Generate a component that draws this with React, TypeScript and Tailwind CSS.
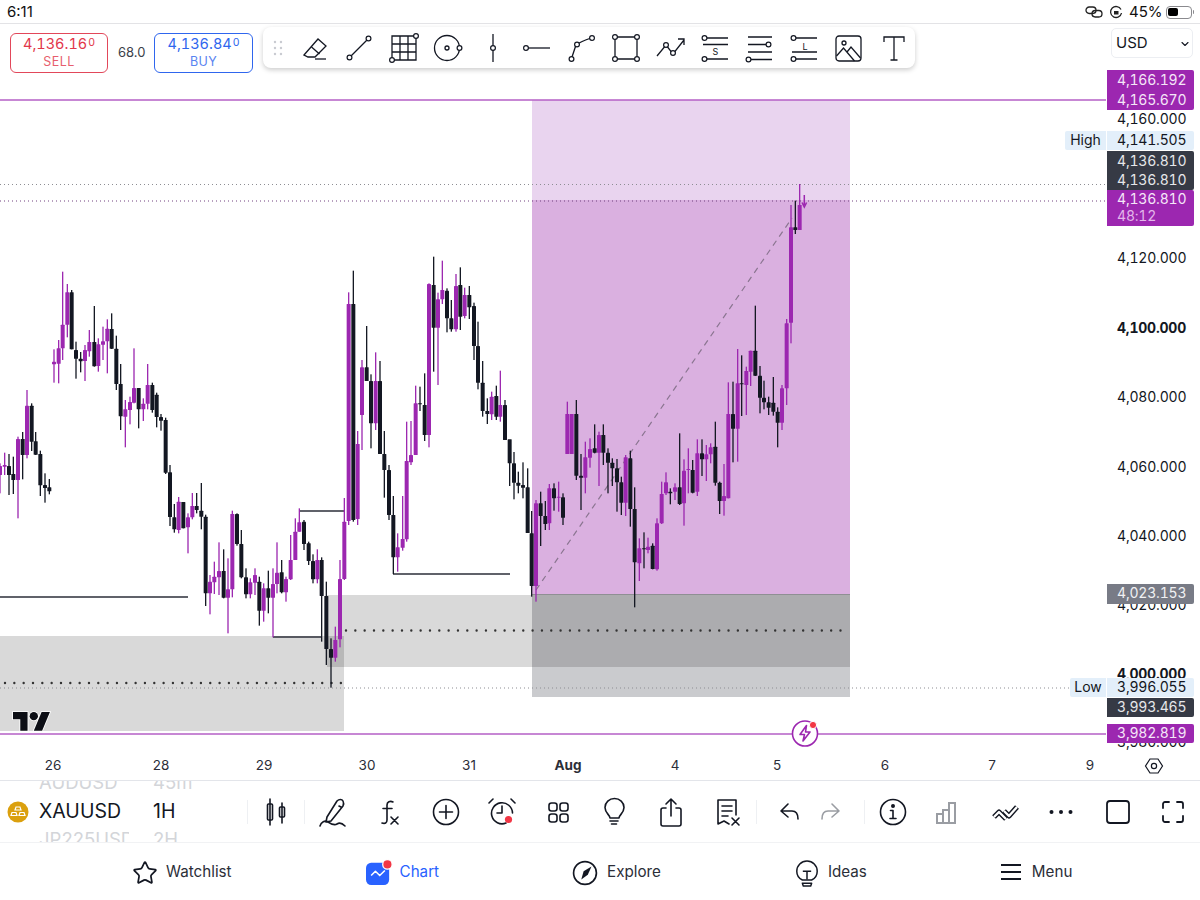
import { ChevronDown, Star } from "lucide-react";
import type { ReactNode } from "react";

type Candle = [number, number, number, number, number, "p" | "k"];

// candles were read off 3x crops, so each run keeps its crop origin
const candleRuns: { ox: number; oy: number; data: Candle[] }[] = [
  {
    ox: 0,
    oy: 250,
    data: [
      [0, 640, 730, 648, 675, "p"], [14, 608, 675, 645, 650, "p"], [27, 612, 735, 648, 675, "k"],
      [40, 620, 732, 672, 690, "k"], [54, 560, 805, 567, 690, "p"], [68, 546, 688, 567, 615, "k"],
      [81, 420, 625, 467, 615, "p"], [95, 460, 603, 467, 575, "k"], [107, 546, 615, 574, 614, "k"],
      [121, 602, 738, 612, 706, "k"], [135, 670, 758, 705, 714, "k"], [148, 687, 733, 712, 724, "k"],
      [162, 298, 398, 335, 343, "p"], [176, 270, 400, 295, 341, "p"], [188, 65, 330, 224, 295, "p"],
      [202, 102, 262, 127, 224, "p"], [215, 120, 298, 127, 298, "k"], [228, 275, 386, 300, 326, "k"],
      [242, 306, 367, 326, 334, "k"], [255, 285, 393, 300, 333, "p"], [268, 240, 320, 276, 304, "p"],
      [283, 168, 350, 276, 349, "k"], [295, 265, 365, 283, 348, "p"], [309, 230, 330, 274, 284, "p"],
      [322, 208, 370, 236, 274, "p"], [335, 190, 297, 237, 296, "k"], [349, 257, 420, 296, 402, "k"],
      [362, 342, 540, 402, 499, "k"], [376, 450, 592, 478, 500, "p"], [390, 440, 523, 456, 480, "p"],
      [402, 295, 460, 414, 458, "p"], [416, 414, 535, 414, 478, "k"], [430, 445, 513, 461, 478, "p"],
      [443, 342, 478, 405, 461, "p"], [457, 398, 488, 405, 480, "k"], [470, 428, 532, 434, 501, "k"],
      [483, 492, 542, 501, 512, "k"], [497, 503, 672, 510, 668, "k"], [510, 645, 828, 667, 801, "k"],
    ],
  },
  {
    ox: 0,
    oy: 500,
    data: [
      [523, 12, 98, 52, 88, "k"], [536, -9, 100, 5, 90, "p"], [550, 6, 85, 6, 85, "k"],
      [564, 40, 160, 52, 82, "p"], [577, -21, 58, 18, 52, "p"], [590, -21, 40, 18, 30, "k"],
      [604, -51, 88, 32, 50, "k"], [617, 44, 318, 50, 280, "k"], [630, 225, 343, 245, 280, "p"],
      [643, 185, 282, 230, 247, "p"], [657, 127, 285, 213, 232, "p"], [671, 148, 295, 213, 293, "k"],
      [684, 175, 400, 268, 293, "p"], [697, 32, 292, 42, 268, "p"], [711, 40, 137, 42, 132, "k"],
      [724, 90, 235, 132, 232, "k"], [738, 205, 295, 232, 283, "k"], [751, 235, 295, 247, 283, "p"],
      [765, 205, 285, 225, 248, "p"], [778, 230, 377, 245, 332, "k"], [791, 250, 365, 265, 332, "p"],
      [805, 212, 340, 265, 293, "k"], [819, 205, 412, 252, 293, "p"], [831, 127, 280, 218, 252, "p"],
      [845, 180, 280, 217, 277, "k"], [858, 230, 305, 237, 277, "p"], [872, 105, 240, 180, 238, "p"],
      [886, 55, 180, 95, 180, "p"], [898, 25, 95, 67, 95, "p"], [912, 60, 150, 65, 132, "k"],
      [926, 125, 195, 130, 183, "k"], [939, 163, 250, 183, 238, "k"], [952, 148, 250, 180, 238, "p"],
      [965, 172, 425, 180, 288, "k"], [979, 245, 495, 288, 447, "k"], [993, 415, 563, 447, 473, "k"],
      [1006, 380, 485, 420, 473, "p"], [1020, 180, 442, 237, 418, "p"], [1033, -6, 240, 65, 237, "p"],
    ],
  },
  {
    ox: 260,
    oy: 250,
    data: [
      [266, 127, 825, 162, 813, "p"], [280, 62, 815, 162, 810, "k"], [293, 543, 825, 582, 807, "p"],
      [306, 330, 600, 352, 495, "p"], [320, 228, 393, 352, 393, "k"], [333, 373, 595, 393, 520, "k"],
      [347, 307, 540, 393, 520, "p"], [360, 333, 612, 393, 612, "k"], [373, 543, 743, 612, 660, "k"],
      [387, 645, 810, 660, 795, "k"], [400, 738, 972, 795, 922, "k"], [413, 850, 965, 892, 922, "p"],
      [428, 738, 902, 867, 893, "p"], [440, 515, 875, 633, 868, "p"], [453, 513, 645, 615, 637, "p"],
      [467, 407, 615, 460, 615, "p"], [480, 410, 483, 460, 463, "k"], [494, 370, 573, 465, 555, "k"],
      [507, 100, 592, 102, 555, "p"], [521, 20, 365, 105, 233, "k"], [534, 128, 405, 148, 233, "p"],
      [547, 32, 162, 120, 148, "p"], [561, 115, 247, 122, 205, "k"], [574, 150, 245, 205, 238, "k"],
      [588, 72, 245, 108, 238, "p"], [601, 52, 240, 105, 200, "k"], [614, 113, 205, 135, 198, "p"],
      [628, 108, 207, 135, 172, "k"], [642, 158, 330, 168, 288, "k"], [654, 215, 418, 288, 398, "k"],
      [668, 333, 500, 398, 483, "k"], [682, 445, 522, 483, 492, "k"], [695, 425, 510, 440, 493, "p"],
      [709, 407, 510, 438, 500, "k"], [721, 362, 515, 465, 500, "p"], [735, 450, 570, 465, 570, "k"],
      [749, 570, 708, 568, 640, "k"], [762, 606, 748, 640, 698, "k"], [775, 665, 730, 698, 707, "k"],
      [789, 637, 745, 705, 713, "k"], [803, 655, 849, 712, 849, "k"],
    ],
  },
  {
    ox: 530,
    oy: 380,
    data: [
      [5, 393, 650, 460, 618, "k"], [18, 360, 665, 370, 618, "p"], [32, 335, 498, 370, 408, "k"],
      [46, 363, 450, 408, 432, "k"], [58, 312, 450, 325, 430, "p"], [72, 310, 392, 325, 355, "k"],
      [86, 305, 395, 350, 352, "p"], [99, 340, 435, 352, 413, "k"], [112, 65, 222, 102, 222, "p"],
      [125, 102, 222, 102, 222, "p"], [139, 60, 300, 102, 287, "k"], [153, 222, 390, 287, 293, "k"],
      [166, 185, 340, 232, 293, "p"], [180, 175, 263, 207, 233, "p"], [194, 133, 220, 205, 218, "k"],
      [207, 155, 318, 165, 218, "p"], [220, 133, 255, 165, 218, "k"], [234, 205, 340, 218, 248, "k"],
      [247, 235, 318, 248, 265, "k"], [261, 237, 395, 265, 307, "k"], [274, 290, 405, 307, 368, "k"],
      [287, 225, 408, 232, 368, "p"], [301, 212, 440, 235, 387, "k"], [314, 322, 682, 387, 547, "k"],
      [328, 475, 603, 505, 550, "p"], [342, 457, 565, 505, 507, "k"], [354, 473, 520, 500, 510, "p"],
      [368, 490, 568, 497, 567, "k"], [381, 415, 572, 430, 568, "p"], [395, 305, 432, 342, 430, "p"],
      [408, 277, 345, 307, 340, "p"], [421, 325, 373, 335, 340, "k"], [435, 310, 360, 322, 335, "p"],
      [449, 160, 375, 322, 372, "k"], [462, 238, 437, 272, 370, "p"], [475, 205, 340, 267, 270, "p"],
      [488, 240, 340, 270, 338, "k"], [502, 178, 348, 220, 335, "p"], [516, 178, 288, 220, 238, "k"],
      [529, 195, 303, 223, 238, "p"], [542, 190, 250, 202, 223, "p"], [556, 125, 317, 200, 308, "k"],
      [569, 305, 402, 308, 363, "k"], [582, 252, 407, 348, 363, "p"],
    ],
  },
  {
    ox: 700,
    oy: 170,
    data: [
      [85, 637, 985, 732, 985, "p"], [99, 635, 877, 732, 776, "k"], [113, 537, 875, 640, 776, "p"],
      [125, 556, 738, 640, 643, "k"], [139, 590, 735, 603, 645, "p"], [152, 542, 648, 542, 605, "p"],
      [166, 407, 618, 542, 617, "k"], [180, 588, 730, 617, 683, "k"], [192, 632, 718, 683, 697, "k"],
      [206, 680, 735, 697, 713, "k"], [220, 621, 737, 698, 725, "k"], [233, 712, 832, 725, 758, "k"],
      [246, 645, 780, 655, 758, "p"], [260, 447, 705, 460, 655, "p"], [273, 105, 520, 172, 458, "p"],
      [286, 92, 192, 172, 180, "k"], [299, 42, 180, 105, 180, "p"],
    ],
  },
];

const candleColor = { p: "#9c27b0", k: "#131722" };

function Candles() {
  return (
    <g>
      {candleRuns.flatMap((run, i) =>
        run.data.map(([x, hi, lo, top, bottom, tone], j) => {
          const cx = run.ox + x / 3;
          return (
            <g key={`${i}-${j}`} fill={candleColor[tone]}>
              <rect x={cx - 0.65} y={run.oy + hi / 3} width={1.3} height={(lo - hi) / 3} />
              <rect x={cx - 2} y={run.oy + top / 3} width={4} height={Math.max((bottom - top) / 3, 1)} rx={0.5} />
            </g>
          );
        })
      )}
    </g>
  );
}

function ChartCanvas() {
  return (
    <svg viewBox="0 24 1200 726" className="block h-[726px] w-[1200px]">
      {/* position tool */}
      <rect x={532} y={100} width={318} height={100} fill="#e9d4ef" />
      <rect x={532} y={200} width={318} height={394} fill="#dab0e0" />
      <rect x={532} y={594} width={318} height={103} fill="#cacbce" />
      <line x1={532} y1={594.5} x2={850} y2={594.5} stroke="#8f8f94" strokeWidth={1} />

      {/* supply / demand zones */}
      <rect x={0} y={636} width={344} height={95} fill="#000" fillOpacity={0.15} />
      <rect x={327} y={595} width={523} height={72} fill="#000" fillOpacity={0.15} />

      <line x1={0} y1={100} x2={1106} y2={100} stroke="#b45fc6" strokeWidth={1.3} />
      <line x1={0} y1={734} x2={1106} y2={734} stroke="#b45fc6" strokeWidth={1.3} />
      <line x1={0} y1={184.5} x2={1106} y2={184.5} stroke="#8d8d93" strokeDasharray="1 3" />
      <line x1={0} y1={201} x2={1106} y2={201} stroke="#70407e" strokeDasharray="1 3" />
      <line x1={0} y1={688} x2={1070} y2={688} stroke="#8d8d93" strokeDasharray="1 3" />
      <line x1={5} y1={683} x2={344} y2={683} stroke="#333" strokeWidth={2.4} strokeDasharray="0 9.33" strokeLinecap="round" />
      <line x1={346} y1={630.5} x2={846} y2={630.5} stroke="#333" strokeWidth={2.4} strokeDasharray="0 9.33" strokeLinecap="round" />

      <line x1={536} y1={590} x2={792} y2={218} stroke="#8a7590" strokeWidth={1.2} strokeDasharray="6 5" />

      <g stroke="#2b2e38" strokeWidth={1.4}>
        <line x1={0} y1={597} x2={188} y2={597} />
        <line x1={299} y1={511} x2={345} y2={511} />
        <line x1={393} y1={574} x2={510} y2={574} />
        <line x1={273} y1={637} x2={322} y2={637} />
      </g>

      <Candles />

      <path d="M804.3 195v10M802 202.5l2.3 4.5 2.3-4.5" fill="none" stroke="#9c27b0" strokeWidth={1.5} />

      {/* TradingView mark */}
      <g transform="translate(13 712) scale(1.04) translate(0 -4)" fill="#0c0e15" stroke="#fff" strokeWidth={1.6} style={{ paintOrder: "stroke" }}>
        <path d="M14 22H7V11H0V4h14v18z" />
        <path d="M28 22h-8l7.5-18h8L28 22z" />
        <circle cx={20} cy={8} r={4} />
      </g>

      {/* lightning badge */}
      <circle cx={805} cy={733.5} r={12.5} fill="#fff" stroke="#9c27b0" strokeWidth={1.6} />
      <path d="M806.5 725.5l-6.5 9h4.5l-1.5 6.5 7-9h-4.5z" fill="none" stroke="#9c27b0" strokeWidth={1.6} strokeLinejoin="round" />
      <circle cx={813} cy={725} r={3.6} fill="#f23645" stroke="#fff" />
    </svg>
  );
}

function Axis({ className, children }: { className: string; children: ReactNode }) {
  return (
    <div className={`absolute left-[1117px] flex h-5 items-center text-[14px] tracking-[-0.2px] tabular-nums text-[#131722] ${className}`}>
      {children}
    </div>
  );
}

function Tag({ className, children }: { className: string; children: ReactNode }) {
  return (
    <div className={`absolute left-[1107px] flex w-[87px] flex-col rounded-r-[2px] pl-[10px] text-[14px] tracking-[-0.2px] tabular-nums ${className}`}>
      {children}
    </div>
  );
}

function Side({ className, children }: { className: string; children: ReactNode }) {
  return (
    <div className={`absolute flex h-[19px] items-center justify-center rounded-l-[2px] bg-[#e3effa] pb-[1px] text-[14px] leading-[18px] text-[#131722] ${className}`}>
      {children}
    </div>
  );
}

function PriceScale() {
  return (
    <>
      <Axis className="top-[84px]">4,160.000</Axis>
      <Axis className="top-[223px]">4,120.000</Axis>
      <Axis className="top-[293px] font-bold">4,100.000</Axis>
      <Axis className="top-[362px]">4,080.000</Axis>
      <Axis className="top-[432px]">4,060.000</Axis>
      <Axis className="top-[501px]">4,040.000</Axis>
      <Axis className="top-[570px]">4,020.000</Axis>
      <Axis className="top-[639px] font-bold">4,000.000</Axis>
      <Axis className="top-[707px]">3,980.000</Axis>

      <Tag className="top-[46px] bg-[#9c27b0] leading-[20px] text-[#f5e6f8]">
        <span>4,166.192</span>
        <span>4,165.670</span>
      </Tag>
      <Side className="left-[1065px] top-[107px] w-[41px]">High</Side>
      <Tag className="top-[107px] h-[19px] bg-[#e3effa] leading-[18px] text-[#131722]">4,141.505</Tag>
      <Tag className="top-[127px] h-[39px] bg-[#363a45] leading-[19px] text-[#e6e7ea]">
        <span>4,136.810</span>
        <span>4,136.810</span>
      </Tag>
      <Tag className="top-[166px] h-[36px] bg-[#9c27b0] text-[#f5e6f8]">
        <span className="leading-[18px]">4,136.810</span>
        <span className="leading-[16px] text-[#e3b6ea]">48:12</span>
      </Tag>
      <Tag className="top-[560px] h-5 bg-[#787b86] leading-[18px] text-[#f0f1f3]">4,023.153</Tag>
      <Side className="left-[1070px] top-[654px] w-[36px]">Low</Side>
      <Tag className="top-[654px] h-[19px] bg-[#e3effa] leading-[18px] text-[#131722]">3,996.055</Tag>
      <Tag className="top-[674px] h-[19px] bg-[#363a45] leading-[18px] text-[#e6e7ea]">3,993.465</Tag>
      <Tag className="top-[700px] h-[19px] bg-[#9c27b0] leading-[18px] text-[#f5e6f8]">3,982.819</Tag>
    </>
  );
}

function TradeBox({ price, label, className }: { price: string; label: string; className: string }) {
  return (
    <div className={`flex h-10 flex-col items-center justify-center rounded-[6px] border-[1.5px] leading-none ${className}`}>
      <div className="-mt-[1px] text-[14.5px] tabular-nums">
        {price}
        <span className="relative -top-[3px] ml-[1px] text-[10.5px]">0</span>
      </div>
      <div className="mt-[4px] text-[12.5px] tracking-[0.4px] opacity-80">{label}</div>
    </div>
  );
}

const line = { fill: "none", stroke: "#131722", strokeWidth: 1.3 };

function Node({ x, y }: { x: number; y: number }) {
  return <circle cx={x} cy={y} r={2.4} fill="#fff" stroke="#131722" strokeWidth={1.2} />;
}

function DrawIcon({ children }: { children: ReactNode }) {
  return (
    <div className="flex w-[44.6px] justify-center">
      <svg viewBox="0 0 32 32" className="h-8 w-8" {...line}>
        {children}
      </svg>
    </div>
  );
}

function DrawingBar() {
  return (
    <div className="ml-[10px] mt-[3px] flex h-[41px] w-[652px] items-center rounded-[8px] bg-white pl-[9px] shadow-[0_2px_5px_rgba(0,0,0,0.2)]">
      <svg viewBox="0 0 12 16" className="mr-[8.7px] h-4 w-3" fill="#c9cbd1">
        <circle cx={3} cy={2} r={1.2} />
        <circle cx={9} cy={2} r={1.2} />
        <circle cx={3} cy={8} r={1.2} />
        <circle cx={9} cy={8} r={1.2} />
        <circle cx={3} cy={14} r={1.2} />
        <circle cx={9} cy={14} r={1.2} />
      </svg>
      <DrawIcon>
        <path d="M5 23L19 7l8 7-11 11H9z" />
        <path d="M12.5 15l8 7" />
        <path d="M16 27h11" />
      </DrawIcon>
      <DrawIcon>
        <path d="M8 24L24 8" />
        <Node x={6.5} y={25.5} />
        <Node x={25.5} y={6.5} />
      </DrawIcon>
      <DrawIcon>
        <path d="M4 4h24v24H4zM12 4v24M20 4v24M4 12h24M4 20h24" />
        <Node x={4} y={28} />
        <Node x={28} y={4} />
      </DrawIcon>
      <DrawIcon>
        <circle cx={15} cy={16} r={12.5} />
        <circle cx={15} cy={16} r={2} />
        <Node x={27.5} y={16} />
      </DrawIcon>
      <DrawIcon>
        <path d="M16 2v28" />
        <Node x={16} y={16} />
      </DrawIcon>
      <DrawIcon>
        <path d="M7 16h22" />
        <Node x={5} y={16} />
      </DrawIcon>
      <DrawIcon>
        <path d="M6 25l4-12c4-3 9-5 15-7" />
        <Node x={5.5} y={27} />
        <Node x={11} y={12.5} />
        <Node x={26} y={6} />
      </DrawIcon>
      <DrawIcon>
        <path d="M5 5h22v22H5zM5 5v22" />
        <Node x={5} y={5} />
        <Node x={27} y={5} />
        <Node x={5} y={27} />
        <Node x={27} y={27} />
      </DrawIcon>
      <DrawIcon>
        <path d="M2 24l9-11 7 9 11-14M23 7h6v6" />
        <Node x={11} y={13} />
        <Node x={18} y={21} />
      </DrawIcon>
      <DrawIcon>
        <path d="M8 6h21M4 12.5h25M8 27h21" />
        <Node x={5.5} y={6} />
        <Node x={5.5} y={27} />
        <text x={16.5} y={22.5} fontSize={9} stroke="none" fill="#131722" textAnchor="middle">
          S
        </text>
      </DrawIcon>
      <DrawIcon>
        <path d="M5 5h24M5 12.5h18M5 20h24M8 27.5h21" />
        <Node x={25.5} y={12.5} />
        <Node x={5.5} y={27.5} />
      </DrawIcon>
      <DrawIcon>
        <path d="M8 6h21M4 20h25M8 27h21" />
        <Node x={5.5} y={6} />
        <Node x={5.5} y={27} />
        <text x={17} y={17.5} fontSize={9} stroke="none" fill="#131722" textAnchor="middle">
          L
        </text>
      </DrawIcon>
      <DrawIcon>
        <rect x={4} y={4} width={25} height={25} rx={3} />
        <circle cx={12} cy={11} r={2} />
        <path d="M4.5 24l7-8 11 13M15 20l4-5 9.5 11" />
      </DrawIcon>
      <DrawIcon>
        <path d="M7 10V5h20v5M17 5v23M13.5 28h7" />
      </DrawIcon>
    </div>
  );
}

function ChartHeader() {
  return (
    <div className="absolute inset-x-0 top-0 flex items-start">
      <div className="ml-[10px] mt-[9px] flex items-center">
        <TradeBox price="4,136.16" label="SELL" className="w-[98px] border-[#e2475a] text-[#e2374a]" />
        <div className="mx-[10px] w-[26px] text-[13px] text-[#3b3f4a]">68.0</div>
        <TradeBox price="4,136.84" label="BUY" className="w-[99px] border-[#2f66ee] text-[#2f66ee]" />
      </div>
      <DrawingBar />
      <div className="ml-[196px] mt-[4px] flex h-[30px] w-[82px] items-center justify-between rounded-[5px] border border-[#eceef2] bg-white pl-[4px] pr-[1px] pt-[1px] text-[15px] text-[#131722]">
        USD
        <ChevronDown size={12} strokeWidth={2.2} />
      </div>
    </div>
  );
}

function TimeTick({ className, bold, children }: { className: string; bold?: boolean; children: ReactNode }) {
  return <div className={`flex justify-center text-[13.5px] text-[#2b2e38] ${bold ? "font-bold" : ""} ${className}`}>{children}</div>;
}

function TimeAxis() {
  return (
    <div className="flex h-[31px] items-center border-b border-[#e3e5ea] pt-[1px]">
      <TimeTick className="w-[106px]">26</TimeTick>
      <TimeTick className="w-[110px]">28</TimeTick>
      <TimeTick className="w-[96px]">29</TimeTick>
      <TimeTick className="w-[110px]">30</TimeTick>
      <TimeTick className="w-[94px]">31</TimeTick>
      <TimeTick className="w-[104px]" bold>
        Aug
      </TimeTick>
      <TimeTick className="w-[110px]">4</TimeTick>
      <TimeTick className="w-[94px]">5</TimeTick>
      <TimeTick className="w-[122px]">6</TimeTick>
      <TimeTick className="w-[92px]">7</TimeTick>
      <TimeTick className="w-[104px]">9</TimeTick>
      <TimeTick className="w-[24px]">
        <svg viewBox="0 0 20 20" className="h-5 w-5" fill="none" stroke="#131722" strokeWidth={1.2}>
          <path d="M6 3h8l4.5 7-4.5 7H6l-4.5-7z" />
          <circle cx={10} cy={10} r={2.6} />
        </svg>
      </TimeTick>
    </div>
  );
}

function Tool({ className, children }: { className: string; children: ReactNode }) {
  return <div className={`flex justify-center ${className}`}>{children}</div>;
}

function Glyph({ children, muted }: { children: ReactNode; muted?: boolean }) {
  return (
    <svg viewBox="0 0 32 32" className="h-8 w-8 shrink-0" fill="none" stroke={muted ? "#9a9da3" : "#131722"} strokeWidth={1.6} strokeLinecap="round" strokeLinejoin="round">
      {children}
    </svg>
  );
}

function Separator() {
  return <div className="h-[24px] w-px bg-[#eef0f3]" />;
}

function SymbolPicker() {
  return (
    <div className="flex h-[61px] w-[247px] items-center">
      <svg viewBox="0 0 22 22" className="ml-[7px] mr-[10px] h-[22px] w-[22px] shrink-0">
        <circle cx={11} cy={11} r={10.5} fill="#dba00e" />
        <path d="M9 6h4l1 3H8zM5 11.5h4l1 3H4zM13 11.5h4l1 3h-6z" fill="none" stroke="#fff" strokeWidth={1.2} />
      </svg>
      <div className="flex h-[61px] flex-col justify-center overflow-hidden">
        <div className="flex h-[28.5px] shrink-0 items-center text-[18.5px] text-[#d3d5d9]">
          <span className="w-[114px]">AUDUSD</span>
          <span>45m</span>
        </div>
        <div className="flex h-[29px] shrink-0 items-center text-[19.5px] text-[#131722]">
          <span className="w-[114px]">XAUUSD</span>
          <span>1H</span>
        </div>
        <div className="flex h-[28.5px] shrink-0 items-center text-[18.5px] text-[#d3d5d9]">
          <span className="mr-[24px] w-[90px] overflow-hidden whitespace-nowrap">JP225USD</span>
          <span>2H</span>
        </div>
      </div>
    </div>
  );
}

function BottomToolbar() {
  return (
    <div className="flex h-[62px] items-center overflow-hidden border-b border-[#f1f2f4]">
      <SymbolPicker />
      <Separator />
      <Tool className="w-[56px]">
        <Glyph>
          <path d="M10 3v26M22 7v20" />
          <rect x={7.5} y={8} width={5} height={16} rx={1} />
          <rect x={19.5} y={11} width={5} height={10} rx={1} />
        </Glyph>
      </Tool>
      <Separator />
      <Tool className="w-[56px]">
        <Glyph>
          <path d="M10 21L20 5c2-2 5-2 6 0s1 3 0 5L14 25l-5 1zM22 10l2 1" />
          <path d="M3 30c1-4 5-6 8-4s6 4 9 2 6 0 8 2" />
        </Glyph>
      </Tool>
      <Tool className="w-[56px]">
        <Glyph>
          <path d="M20 6c-3-1.5-6 0-6 3v15c0 3-2 4-5 3M10 12.5h9M18 21l7 7M25 21l-7 7" />
        </Glyph>
      </Tool>
      <Tool className="w-[57px]">
        <Glyph>
          <circle cx={16} cy={16} r={12.5} />
          <path d="M16 9.5v13M9.5 16h13" />
        </Glyph>
      </Tool>
      <Tool className="w-[56px]">
        <Glyph>
          <path d="M20 27A10.5 10.5 0 1 1 26.5 17" />
          <path d="M16 10v7h-5M3 7l4-4M25 3l4 4" />
          <circle cx={22.5} cy={23.5} r={3.6} fill="#f23645" stroke="none" />
        </Glyph>
      </Tool>
      <Tool className="w-[56px]">
        <Glyph>
          <rect x={7} y={7} width={8} height={8} rx={2.5} />
          <rect x={18} y={7} width={8} height={8} rx={2.5} />
          <rect x={7} y={18} width={8} height={8} rx={2.5} />
          <rect x={18} y={18} width={8} height={8} rx={2.5} />
        </Glyph>
      </Tool>
      <Tool className="w-[56px]">
        <Glyph>
          <path d="M12 22c0-3-5-5-5-10.5a9.5 9 0 0 1 19 0c0 5.5-5 7.5-5 10.5zM12 25h8M13.5 28h5" />
        </Glyph>
      </Tool>
      <Tool className="w-[58px]">
        <Glyph>
          <path d="M11 12H8a2 2 0 0 0-2 2v14a2 2 0 0 0 2 2h16a2 2 0 0 0 2-2V14a2 2 0 0 0-2-2h-3M16 20V3M11 8l5-5 5 5" />
        </Glyph>
      </Tool>
      <Tool className="w-[56px]">
        <Glyph>
          <path d="M6 28V4h18v15M6 28l6-3 5 3M10 10h10M10 15h10M10 20h6M20 22l7 7M27 22l-7 7" />
        </Glyph>
      </Tool>
      <Separator />
      <Tool className="w-[63px]">
        <Glyph>
          <path d="M15 8l-7 7 7 6M8 15h11c4 0 6 2 6 8" />
        </Glyph>
      </Tool>
      <Tool className="mr-[22px] w-[22px]">
        <Glyph muted>
          <path d="M17 8l7 7-7 6M24 15H13c-4 0-6 2-6 8" />
        </Glyph>
      </Tool>
      <Separator />
      <Tool className="w-[55px]">
        <Glyph>
          <circle cx={16} cy={16} r={12.5} />
          <circle cx={16} cy={10} r={1.2} fill="#131722" />
          <path d="M13.5 14.5H16v8M13 22.5h6" />
        </Glyph>
      </Tool>
      <Tool className="w-[54px]">
        <Glyph muted>
          <path d="M6 27v-9h6v9zM12 27V14h6v13zM18 27V7h6v20z" strokeWidth={2} strokeLinejoin="miter" />
        </Glyph>
      </Tool>
      <Tool className="w-[62px]">
        <svg viewBox="0 0 32 32" className="h-8 w-8 shrink-0" fill="none" strokeLinejoin="round">
          <g stroke="#131722" strokeWidth={5.2}>
            <path d="M5 21l5-5 7 7" />
            <path d="M15 15l5 5 8-9" />
          </g>
          <g stroke="#fff" strokeWidth={2.4}>
            <path d="M5 21l5-5 7 7" />
            <path d="M15 15l5 5 8-9" />
          </g>
        </svg>
      </Tool>
      <Tool className="w-[50px]">
        <svg viewBox="0 0 32 32" className="h-8 w-8" fill="#131722">
          <circle cx={6.5} cy={16} r={2} />
          <circle cx={16} cy={16} r={2} />
          <circle cx={25.5} cy={16} r={2} />
        </svg>
      </Tool>
      <Tool className="w-[64px]">
        <Glyph>
          <rect x={5} y={5} width={22} height={22} rx={3} strokeWidth={1.8} />
        </Glyph>
      </Tool>
      <Tool className="w-[46px]">
        <Glyph>
          <path d="M12 6H8a2 2 0 0 0-2 2v4M20 6h4a2 2 0 0 1 2 2v4M12 26H8a2 2 0 0 1-2-2v-4M20 26h4a2 2 0 0 0 2-2v-4" strokeWidth={1.8} />
        </Glyph>
      </Tool>
    </div>
  );
}

function NavItem({ icon, label, className }: { icon: ReactNode; label: string; className: string }) {
  return (
    <div className={`flex items-center text-[15.2px] ${className}`}>
      {icon}
      {label}
    </div>
  );
}

function BottomNav() {
  return (
    <div className="flex h-[57px] items-center pl-[132px] pt-[2px]">
      <NavItem className="gap-[8px] text-[#2b2e38]" icon={<Star size={26} strokeWidth={1.6} color="#131722" />} label="Watchlist" />
      <NavItem
        className="ml-[134px] gap-[10px] text-[#2962ff]"
        icon={
          <svg viewBox="0 0 28 28" className="h-6 w-6 overflow-visible">
            <rect x={0} y={2} width={27} height={26} rx={6} fill="#2962ff" />
            <path d="M6 17l5-5 5 5 6-6" fill="none" stroke="#fff" strokeWidth={1.8} strokeLinejoin="round" />
            <circle cx={25} cy={4} r={5.5} fill="#f23645" stroke="#fff" strokeWidth={1.5} />
          </svg>
        }
        label="Chart"
      />
      <NavItem
        className="ml-[133px] gap-[9px] text-[#2b2e38]"
        icon={
          <svg viewBox="0 0 28 28" className="h-[26px] w-[26px]">
            <circle cx={14} cy={14} r={12.3} fill="none" stroke="#131722" strokeWidth={1.8} />
            <path d="M21 7l-4 9-7 5 2.5-9z" fill="#131722" />
          </svg>
        }
        label="Explore"
      />
      <NavItem
        className="ml-[133px] gap-[8px] text-[#2b2e38]"
        icon={
          <svg viewBox="0 0 28 30" className="h-[30px] w-[26px]" fill="none" stroke="#131722" strokeWidth={1.6} strokeLinejoin="round">
            <path d="M9 22.5c-3-1.5-6-4.5-6-9.5a11 11 0 0 1 22 0c0 5-3 8-6 9.5z" />
            <path d="M9.5 13h9M14 13v9M9 26h10l-1 3h-8z" />
          </svg>
        }
        label="Ideas"
      />
      <NavItem
        className="ml-[132px] gap-[9px] text-[#2b2e38]"
        icon={
          <svg viewBox="0 0 24 20" className="h-5 w-6" stroke="#131722" strokeWidth={2}>
            <path d="M2 3h20M2 10h20M2 17h20" />
          </svg>
        }
        label="Menu"
      />
    </div>
  );
}

function StatusBar() {
  return (
    <div className="flex h-6 items-center justify-between border-b border-[#e3e3e6] pl-[7px] pr-[6px] pt-[1px] text-[15px] text-[#111]">
      <span>6:11</span>
      <div className="flex items-center">
        <svg viewBox="0 0 18 14" className="mr-[6px] h-[14px] w-[18px]" fill="none" stroke="#222" strokeWidth={1.3}>
          <rect x={1} y={2} width={10} height={6.5} rx={3.2} />
          <rect x={7} y={5.5} width={10} height={6.5} rx={3.2} />
        </svg>
        <svg viewBox="0 0 14 14" className="mr-[6px] h-[14px] w-[14px]" fill="none" stroke="#222" strokeWidth={1.3}>
          <path d="M12 4.5A5.5 5.5 0 1 0 12.5 8" />
          <rect x={5} y={6} width={4.5} height={3.5} fill="#222" stroke="none" />
        </svg>
        <span className="mr-[3px]">45%</span>
        <div className="flex h-[13px] w-[26px] items-center rounded-[4px] border border-[#8a8a8e] p-[1.5px]">
          <div className="h-full w-[10px] rounded-[2px] bg-black" />
        </div>
        <div className="ml-[1px] h-[4px] w-[1.5px] rounded-r bg-[#8a8a8e]" />
      </div>
    </div>
  );
}

export default function App() {
  return (
    <div className="flex h-[900px] w-[1200px] flex-col overflow-hidden bg-white font-['Inter',sans-serif]">
      <StatusBar />
      <div className="relative h-[726px]">
        <ChartCanvas />
        <PriceScale />
        <ChartHeader />
      </div>
      <TimeAxis />
      <BottomToolbar />
      <BottomNav />
    </div>
  );
}
